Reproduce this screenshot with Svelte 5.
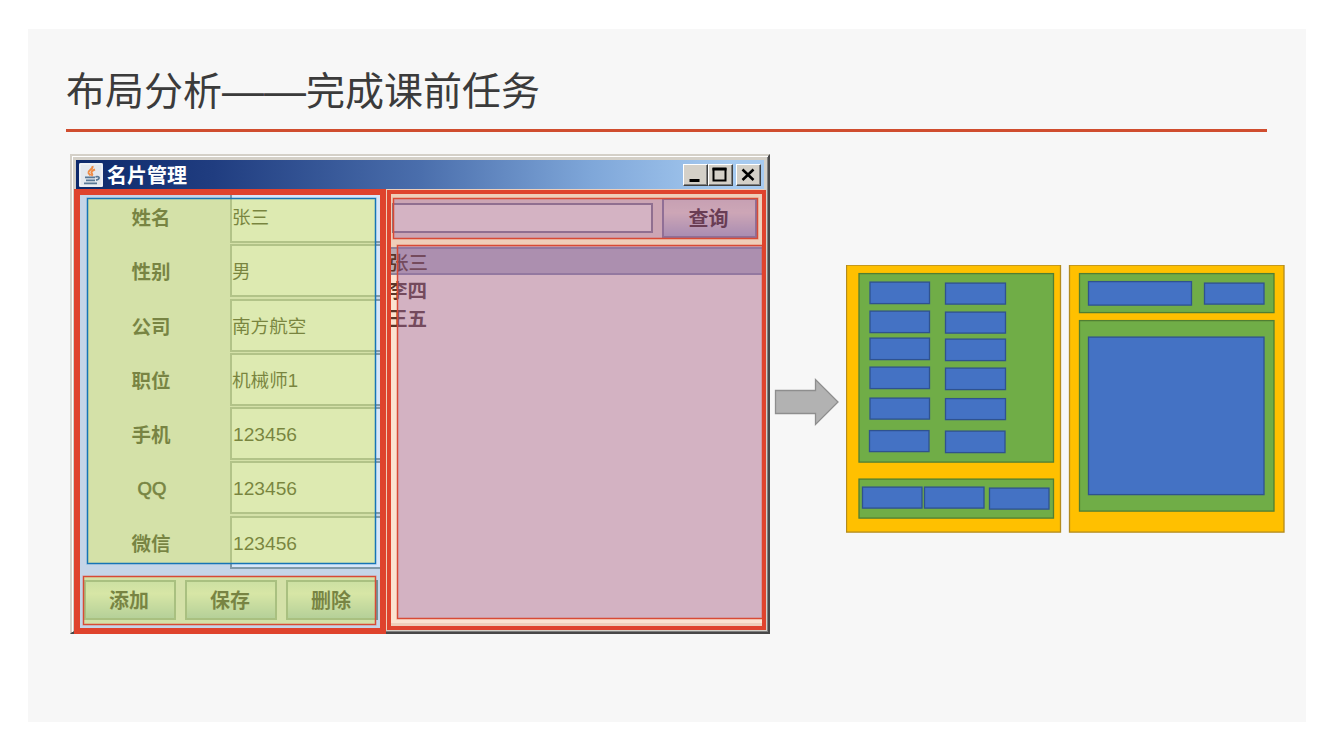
<script>
  const people = [
    ['姓名', '张三'],
    ['性别', '男'],
    ['公司', '南方航空'],
    ['职位', '机械师1'],
    ['手机', '123456'],
    ['QQ', '123456'],
    ['微信', '123456']
  ];
  const actions = ['添加', '保存', '删除'];
  const names = ['张三', '李四', '王五'];

  // x, y, width, height, kind
  const shapes = [
    [0.5, 0.5, 214, 267, 'outer'],
    [13, 9, 194.5, 188.5, 'group'],
    [24, 17.5, 59.5, 21.5, 'item'], [99.5, 18.5, 60, 21, 'item'],
    [24, 46.5, 59.5, 21.5, 'item'], [99.5, 47.5, 60, 21, 'item'],
    [24, 73.5, 59.5, 21.5, 'item'], [99.5, 74.5, 60, 21.5, 'item'],
    [24, 102.5, 59.5, 21.5, 'item'], [99.5, 103.5, 60, 21.5, 'item'],
    [24, 133.5, 59.5, 21, 'item'], [99.5, 134, 60, 21, 'item'],
    [23.5, 166, 59.5, 21, 'item'], [99.5, 166.5, 59.5, 21.5, 'item'],
    [13, 214.5, 194.5, 39, 'group'],
    [16.5, 222.5, 59.5, 21, 'item'], [78.5, 222.5, 59.5, 21, 'item'], [143.5, 223.5, 59.5, 21, 'item'],
    [223.5, 0.5, 214.5, 267, 'outer'],
    [233.5, 9, 194.5, 39, 'group'],
    [242.5, 17, 103, 23.5, 'item'], [358.5, 18.5, 59.5, 21, 'item'],
    [233.5, 56, 194.5, 190.5, 'group'],
    [242.5, 72.5, 175.5, 157.5, 'item']
  ];
</script>

<main class="slide">
  <h1>布局分析<span class="dash">——</span>完成课前任务</h1>
  <div class="stage">
    <section class="window">
      <header class="titlebar">
        <svg class="java" width="24" height="24" viewBox="0 0 24 24">
          <rect width="24" height="24" rx="1.5" fill="#e3e8ee" />
          <rect x="1" y="1" width="22" height="22" fill="none" stroke="#f7f8fa" />
          <path d="M13.500 3c1 3.500-5 4-4 7c.4 1 1.500 1.500 2 2.500M16 6.500c-3 1-4.500 2.800-3 4.200c.8 1 .3 1.600-.5 2.300" fill="none" stroke="#ee8b45" stroke-width="2" />
          <path d="M6 14.300h10M7 17.300h9M5 20.300h13M16.500 13.800c5-1 4.500 2.500 .5 3.300" fill="none" stroke="#587896" stroke-width="1.700" />
        </svg>
        <span class="title">名片管理</span>
        <span class="ctl"><svg width="22" height="20"><path d="M5.500 15.500h10" stroke="#000" stroke-width="3" /></svg></span>
        <span class="ctl"><svg width="22" height="20"><path d="M4.500 4h12v11.500h-12z" fill="none" stroke="#000" stroke-width="2" /><path d="M3.500 4h14" stroke="#000" stroke-width="3" /></svg></span>
        <span class="ctl close"><svg width="22" height="20"><path d="M5.500 4.500l11 10.500M16.500 4.500l-11 10.500" stroke="#000" stroke-width="2.500" /></svg></span>
      </header>
      <div class="body">
        <div class="left">
          <div class="form">
            {#each people as [label, value]}
              <div class="row">
                <span class="label" class:latin={label === 'QQ'}>{label}</span>
                <span class="field" class:digits={value === '123456'}>{value}</span>
              </div>
            {/each}
          </div>
          <div class="actions">
            {#each actions as a}<span class="btn">{a}</span>{/each}
          </div>
        </div>
        <div class="right">
          <div class="search">
            <span class="input"></span>
            <span class="btn query">查询</span>
          </div>
          <ul>
            {#each names as n, i}<li class:selected={i === 0}>{n}</li>{/each}
          </ul>
        </div>
      </div>
      <i class="mark form-mark"></i>
      <i class="mark actions-mark"></i>
      <i class="mark search-mark"></i>
      <i class="mark list-mark"></i>
      <i class="mark left-mark"></i>
      <i class="mark right-mark"></i>
    </section>
    <svg class="arrow" width="66" height="50" viewBox="0 0 66 50">
      <path d="M1.500 13.500H41.500V2.500L64 25L41.500 47.500V36.500H1.500Z" fill="#b2b2b2" stroke="#8e8e8e" stroke-width="1.300" />
    </svg>
    <svg class="diagram" width="439" height="269" viewBox="0 0.4 439 269">
      {#each shapes as [x, y, width, height, kind]}
        <rect {x} {y} {width} {height} class={kind} />
      {/each}
    </svg>
  </div>
</main>

<style>
  :global(body) { background: #fff; }
  * { box-sizing: border-box; }
  .slide {
    width: 1278px;
    height: 693px;
    margin: 29px 28px 0;
    padding: 0 38px;
    background: #f7f7f7;
    overflow: hidden;
  }
  :global(#app) { display: flow-root; }
  h1 {
    width: 1201px;
    height: 103px;
    margin: 0;
    padding-top: 30px;
    border-bottom: 3px solid #d04d2f;
    color: #3b3b3b;
    font: 400 39px/58px "Noto Sans CJK SC", sans-serif;
    white-space: nowrap;
  }
  .dash { font-family: "Liberation Sans", sans-serif; font-size: 42px; line-height: 50px; }
  .stage { display: flex; align-items: flex-start; margin: 22px -30px 0 4px; }
  .window {
    position: relative;
    flex: none;
    width: 700px;
    height: 480px;
    padding: 4px 4px 3px;
    background: #d4d0c8;
    border: 2px solid;
    border-color: #d4d0c8 #484848 #484848 #d4d0c8;
    box-shadow: inset 1px 1px #fff, inset -1px -1px #808080;
    font-family: "Noto Sans CJK SC", sans-serif;
  }
  .titlebar {
    display: flex;
    align-items: center;
    height: 29px;
    padding: 0 3px;
    background: linear-gradient(90deg, #0d296b 0%, #203d80 20%, #4a6eac 50%, #7fa7d9 75%, #a6caf0 95%);
  }
  .title { flex: 1; margin-left: 4px; color: #fff; font-size: 20px; font-weight: 700; line-height: 28px; }
  .ctl {
    width: 25px;
    height: 22px;
    background: #d4d0c8;
    border: 1px solid;
    border-color: #fff #404040 #404040 #fff;
    box-shadow: inset -1px -1px #808080;
  }
  .ctl svg { display: block; }
  .close { margin-left: 3px; }
  .body { display: flex; height: 440px; overflow: hidden; }
  .left { flex: none; width: 305px; overflow: hidden; background: #c5d5e8; }
  .form { display: grid; grid-auto-rows: 54.300px; height: 383px; padding-top: 1px; }
  .row { display: grid; grid-template-columns: 154px 152px; }
  .label {
    padding-right: 4px;
    text-align: center;
    color: #0c1a1e;
    font-size: 19.500px;
    font-weight: 700;
    line-height: 53px;
  }
  .latin { padding-right: 2px; font-family: "Liberation Sans", sans-serif; font-size: 18.500px; font-weight: 400; line-height: 56px; -webkit-text-stroke: .7px #0c1a1e; }
  .field {
    height: 53px;
    padding-left: 0;
    background: #d7e7fa;
    border: solid #8099a8;
    border-width: 2px 0 2px 2px;
    color: #0c1a16;
    font: 18.600px/51px "Liberation Sans", "Noto Sans CJK SC", sans-serif;
    white-space: nowrap;
  }
  .digits { font-size: 19.200px; padding-left: 1px; }
  .actions { display: flex; gap: 9px; padding: 8px 0 0 8px; width: 320px; }
  .btn {
    width: 92px;
    height: 40px;
    border: 2px solid #6f9298;
    background: linear-gradient(#b5d3dd, #cbdfe4 32%, #87b3ca);
    color: #0c1a1e;
    font-size: 20px;
    font-weight: 700;
    line-height: 36px;
    text-align: center;
  }
  .actions .btn { text-indent: -2px; }
  .right { width: 383px; padding-left: 6px; background: #efceb9; }
  .search { display: flex; justify-content: space-between; align-items: center; height: 58px; padding: 0 7px 0 5px; }
  .input { width: 261px; height: 30px; background: #fce4d2; border: 2px solid #8a747e; }
  .query {
    width: 95px;
    border-color: #8b7488;
    background: linear-gradient(#e6c6b8, #f0cfbd 35%, #b6a6b5);
    color: #4a2019;
    text-indent: -2px;
    line-height: 35px;
  }
  ul { height: 376px; margin: 0; padding: 0; list-style: none; background: #fbe3d0; }
  li { height: 28px; padding-left: 1px; color: #5c3628; font-size: 19.500px; font-weight: 700; line-height: 29px; }
  .selected { border: 2px solid #8f8398; background: #b9a9b1; line-height: 26px; font-weight: 500; padding-left: 0; }
  .mark { position: absolute; border: 1px solid #d84a35; box-shadow: 0 0 0 .5px rgba(216, 74, 53, .5), inset 0 0 0 .5px rgba(216, 74, 53, .5); }
  .form-mark {
    left: 15px; top: 42px; width: 289px; height: 366px;
    border-color: #1674b5;
    background: rgba(227, 237, 104, .5);
    box-shadow: 0 0 0 .5px rgba(22, 116, 181, .5), inset 0 0 0 .5px rgba(22, 116, 181, .5);
  }
  .actions-mark { left: 11px; top: 420px; width: 293px; height: 49px; background: rgba(227, 237, 104, .5); }
  .search-mark { left: 321px; top: 42px; width: 365px; height: 41px; background: rgba(153, 105, 172, .4); }
  .list-mark { left: 325px; top: 89px; width: 366px; height: 374px; background: rgba(153, 105, 172, .4); }
  .left-mark { left: 2px; top: 33px; width: 312px; height: 445px; border: 6px solid #df432d; box-shadow: none; }
  .right-mark { left: 315px; top: 34px; width: 379px; height: 440px; border: 4px solid #df432d; box-shadow: none; }
  .arrow { flex: none; margin: 223px 0 0 4px; }
  .diagram { flex: none; margin: 111px 0 0 6px; }
  .outer { fill: #ffc000; stroke: #b48b1c; stroke-width: 1.300px; }
  .group { fill: #70ad47; stroke: #507e32; stroke-width: 1.300px; }
  .item { fill: #4472c4; stroke: #2f528f; stroke-width: 1.300px; }
</style>
